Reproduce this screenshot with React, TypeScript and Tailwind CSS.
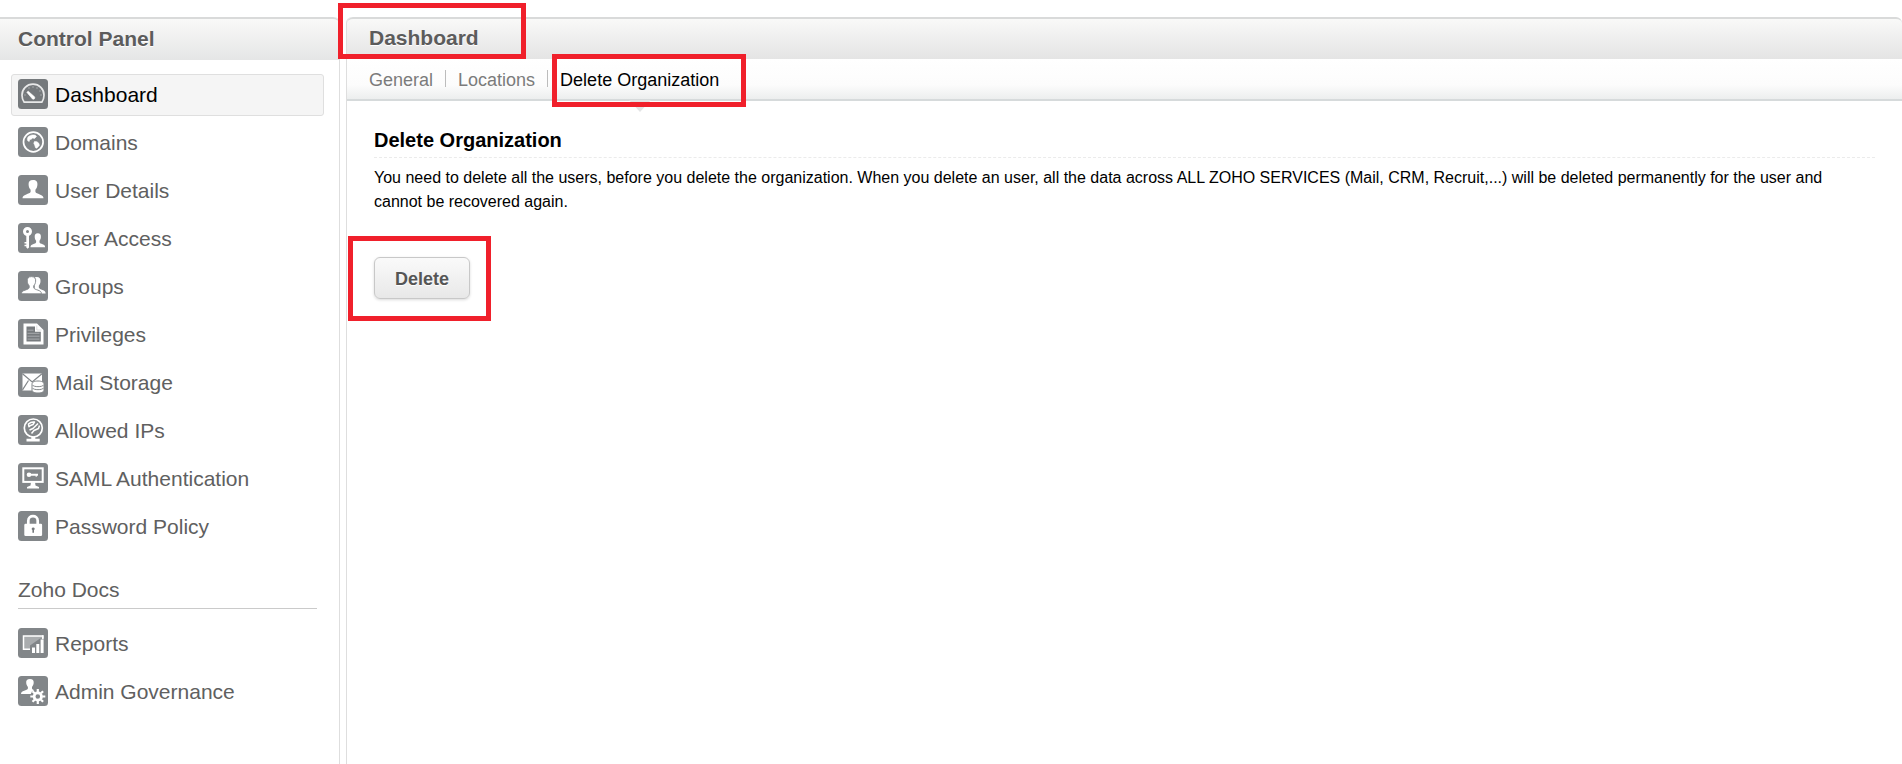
import { useId, useState, type ReactNode } from "react";

function IconTile({ active = false, children }: { active?: boolean; children: ReactNode }) {
  return (
    <svg viewBox="0 0 30 30" className="h-[30px] w-[30px] shrink-0" aria-hidden="true">
      <rect width="30" height="30" rx="3.5" fill={active ? "#75797c" : "#828689"} />
      {children}
    </svg>
  );
}

function Cutout({ mask, children }: { mask: ReactNode; children: ReactNode }) {
  const id = useId();
  return (
    <>
      <mask id={id}>
        <rect width="30" height="30" fill="#fff" />
        {mask}
      </mask>
      <g mask={`url(#${id})`}>{children}</g>
    </>
  );
}

const PERSON =
  "M15 5c-3.300 0-4.700 2-4.400 4.800.1 2.200.9 3.800 2 5v2c-.3 1.400-2.400 1.900-4.400 2.600-2.400.8-3.700 1.700-3.700 3.900h21c0-2.200-1.300-3.100-3.700-3.900-2-.7-4.100-1.200-4.400-2.600v-2c1.100-1.200 1.900-2.800 2-5 .3-2.800-1.100-4.800-4.400-4.800z";

function DashboardIcon() {
  return (
    <IconTile active>
      <path
        d="M6.200 23.200C4.800 21.200 4 19 4 16.200 4 9.800 8.800 5.200 15 5.200s11 4.600 11 11c0 2.800-.8 5-2.200 7z"
        fill="none"
        stroke="#e8e9e9"
        strokeWidth="1.700"
        strokeLinejoin="round"
      />
      <path d="M8.800 13.300 10.200 12.200l6.300 5.600c1 1.500-.5 3-2 2.200z" fill="#fff" stroke="#fff" strokeWidth=".6" />
      <g fill="#a9acae">
        <circle cx="11" cy="9" r=".8" />
        <circle cx="15" cy="8" r=".8" />
        <circle cx="19" cy="9" r=".8" />
        <circle cx="22" cy="12" r=".8" />
        <circle cx="23" cy="16" r=".8" />
        <circle cx="7" cy="16" r=".8" />
      </g>
    </IconTile>
  );
}

function DomainsIcon() {
  return (
    <IconTile>
      <circle cx="15.300" cy="15" r="9.800" fill="none" stroke="#fff" strokeWidth="1.700" />
      <path
        d="M10.500 9.500c2-1.500 4.500-2 7-1.200l1 1.200-2 2-1.800-.6-1.500 1.300-1.500.3-.5 2-1.500-.8c-.6-1.500-.3-3 .8-4.200zM16.500 14.500l2.500.3 2 1.700.3 2-2.500 2.700-1.300-.5-.8-2.700-.9-1.700z"
        fill="#fff"
        stroke="#fff"
        strokeWidth=".6"
      />
    </IconTile>
  );
}

function UserIcon() {
  return (
    <IconTile>
      <path d={PERSON} fill="#fff" />
    </IconTile>
  );
}

function UserAccessIcon() {
  return (
    <IconTile>
      <circle cx="9.500" cy="8.500" r="3" fill="none" stroke="#fff" strokeWidth="3" />
      <path d="M8.300 11.500h2.700v13l-1.400 1.300-1.300-1.300v-1.200H6.500v-1.500h1.800v-1.200H6.500V19h1.800z" fill="#fff" />
      <path d={PERSON} fill="#fff" transform="translate(9.300 6.500) scale(.7 .76)" />
    </IconTile>
  );
}

function GroupsIcon() {
  return (
    <IconTile>
      <path d={PERSON} fill="#fff" transform="translate(6.200 1.500) scale(.84 .9)" />
      <path
        d={PERSON}
        fill="#fff"
        stroke="#828689"
        strokeWidth="1"
        transform="translate(-.8 .9) scale(.95 .94)"
      />
    </IconTile>
  );
}

function PrivilegesIcon() {
  return (
    <IconTile>
      <path d="M5.500 4.500H19l6.500 6.500v14.500h-20z" fill="#fff" />
      <path d="M8.500 7.500H17v5.300h5.800v9.700H8.500z" fill="#777b7e" />
      <path d="M9.500 11.200h6M9.500 14.300h12M9.500 17.200h12M9.500 20.100h12" stroke="#b5b8ba" strokeWidth=".8" />
      <path d="M18.800 6.500v4.500h4.700" fill="none" stroke="#d5d6d7" strokeWidth=".8" />
    </IconTile>
  );
}

function MailStorageIcon() {
  return (
    <IconTile>
      <path d="M4.500 6.500h19.500v17H4.500z" fill="#fff" />
      <path d="M4.500 6.800 14.200 15l9.800-8.200M4.500 22.800l6-9.300" fill="none" stroke="#828689" strokeWidth="1.200" />
      <path
        d="M14 17c0-1.900 2.600-3 6-3s6 1.100 6 3v6c0 1.900-2.600 3-6 3s-6-1.100-6-3z"
        fill="#fff"
        stroke="#828689"
        strokeWidth="1"
      />
      <path
        d="M14.500 18c1 2.200 10 2.200 11 0M14.500 21c1 2.200 10 2.200 11 0"
        fill="none"
        stroke="#85898b"
        strokeWidth="1"
      />
    </IconTile>
  );
}

function AllowedIpsIcon() {
  return (
    <IconTile>
      <circle cx="15.300" cy="13" r="9" fill="none" stroke="#fff" strokeWidth="1.700" />
      <path
        d="M10.500 9c1.700-1.700 3.700-2.300 6-2l-1.500 2.500-2.500 1-1.500 1.300zM11.500 15l3.500-1.500 5-5M13.500 18.500l2.500-3 4.500-2 1-3"
        fill="none"
        stroke="#fff"
        strokeWidth="1.500"
        strokeLinejoin="round"
      />
      <path d="M13.300 21.500h4v2.300h4.400v2.700H8.500v-2.700h4.800z" fill="#fff" />
    </IconTile>
  );
}

function SamlIcon() {
  return (
    <IconTile>
      <rect x="5.300" y="5.300" width="19.400" height="13.600" fill="none" stroke="#fff" strokeWidth="2" />
      <circle cx="11" cy="11.800" r="2.300" fill="#fff" />
      <path d="M12 10.800h8v2h-1.200v1h-1.200v-1H12z" fill="#fff" />
      <path d="M13 19h4l.5 3.500 3.500 1.500v1.500H9V24l3.500-1.500z" fill="#fff" />
    </IconTile>
  );
}

function PasswordIcon() {
  return (
    <IconTile>
      <path d="M10.300 14V9.700c0-6 9.400-6 9.400 0V14" fill="none" stroke="#fff" strokeWidth="2.700" />
      <rect x="6.300" y="12.700" width="17.800" height="12.300" rx="1.200" fill="#fff" />
      <path d="M15.200 16.500c1.700 0 2 2 .8 2.600v2.600h-1.600v-2.600c-1.200-.6-.9-2.600.8-2.600z" fill="#75797c" />
    </IconTile>
  );
}

function ReportsIcon() {
  return (
    <IconTile>
      <path d="M5.500 8h19.300v13.300H5.500z" fill="#a9acae" stroke="#fff" strokeWidth="1.500" />
      <path d="M12 17.500 22 10.500h5V26H12z" fill="#828689" />
      <g fill="#fff">
        <path d="M14 19.500h3V25h-3z" />
        <path d="M18.300 16h3v9h-3z" />
        <path d="M22.600 11.500h3V25h-3z" />
      </g>
      <path d="M24.800 7.300v4" stroke="#fff" strokeWidth="1.500" />
    </IconTile>
  );
}

function AdminIcon() {
  return (
    <IconTile>
      <Cutout mask={<circle cx="19.800" cy="20.500" r="7.500" fill="#000" />}>
        <path d={PERSON} fill="#fff" transform="translate(-.8 -1.200) scale(.85 .82)" />
      </Cutout>
      <circle cx="19.800" cy="20.500" r="3.700" fill="none" stroke="#fff" strokeWidth="2.800" />
      <path
        d="M19.800 13v15M12.300 20.500h15M14.500 15.200l10.600 10.600M25.100 15.200 14.500 25.800"
        stroke="#fff"
        strokeWidth="2.200"
        strokeDasharray="3 9"
      />
    </IconTile>
  );
}

const MENU = [
  { label: "Dashboard", Icon: DashboardIcon },
  { label: "Domains", Icon: DomainsIcon },
  { label: "User Details", Icon: UserIcon },
  { label: "User Access", Icon: UserAccessIcon },
  { label: "Groups", Icon: GroupsIcon },
  { label: "Privileges", Icon: PrivilegesIcon },
  { label: "Mail Storage", Icon: MailStorageIcon },
  { label: "Allowed IPs", Icon: AllowedIpsIcon },
  { label: "SAML Authentication", Icon: SamlIcon },
  { label: "Password Policy", Icon: PasswordIcon },
];

const DOCS_MENU = [
  { label: "Reports", Icon: ReportsIcon },
  { label: "Admin Governance", Icon: AdminIcon },
];

function Menu({ items, current }: { items: typeof MENU; current?: string }) {
  return (
    <ul className="flex flex-col gap-1.5 pr-[15px] pl-[11px]">
      {items.map(({ label, Icon }) => (
        <li key={label}>
          <a
            href="#"
            aria-current={label === current ? "page" : undefined}
            className={
              label === current
                ? "flex h-[42px] items-start gap-[7px] rounded-[3px] border border-[#dfdfdf] bg-[#f5f5f5] px-1.5 pt-1 text-[21px] leading-8 text-black"
                : "flex h-[42px] items-start gap-[7px] rounded-[3px] border border-transparent px-1.5 pt-1 text-[21px] leading-8 text-[#606060]"
            }
          >
            <Icon />
            {label}
          </a>
        </li>
      ))}
    </ul>
  );
}

function Highlight({ className }: { className: string }) {
  return <span aria-hidden="true" className={`pointer-events-none absolute z-10 border-[5px] border-[#f0202b] ${className}`} />;
}

export default function App() {
  const [tab, setTab] = useState("Delete Organization");
  const tabs = ["General", "Locations", "Delete Organization"];

  return (
    <div className="flex min-h-screen gap-1.5 bg-white pt-[17px] font-['Liberation_Sans',Arial,sans-serif] text-black">
      <aside className="w-[340px] shrink-0 rounded-tr-md border-r border-[#dedede]">
        <h2 className="flex h-[43px] items-center rounded-tr-md border-t-2 border-[#d9dada] bg-linear-to-b from-[#f9f9f8] to-[#e5e6e6] pb-0.5 pl-[18px] text-[21px] leading-6 font-bold text-[#5c5c5c] [text-shadow:0_1px_0_#fff]">
          Control Panel
        </h2>
        <nav aria-label="Control Panel" className="pt-3.5">
          <Menu items={MENU} current="Dashboard" />
          <h3 className="mt-7 mr-[22px] ml-[18px] border-b border-[#cacaca] pb-1 text-[21px] leading-7 text-[#606060]">
            Zoho Docs
          </h3>
          <div className="mt-3.5">
            <Menu items={DOCS_MENU} />
          </div>
        </nav>
      </aside>

      <main className="min-w-0 flex-1 rounded-tl-md border-l border-[#dedede]">
        <header className="flex h-[42px] items-center rounded-t-md border-t-2 border-[#d9dada] bg-linear-to-b from-[#f9f9f8] to-[#e4e4e4] pb-0.5 pl-[22px]">
          <h1 className="relative text-[21px] leading-6 font-bold text-[#5c5c5c] [text-shadow:0_1px_0_#fff]">
            Dashboard
            <Highlight className="-top-[23px] -right-[47px] -bottom-[9px] -left-[31px]" />
          </h1>
        </header>
        <div className="flex h-[42px] items-center border-b-2 border-[#d6dadb] bg-[linear-gradient(#fff,#fcfcfc_65%,#eceeee)] pt-0.5 pl-[22px] text-[18px] leading-6">
          {tabs.map((name, i) => (
            <div key={name} className="flex items-center">
              {i > 0 && <span aria-hidden="true" className="mr-3 mb-1 ml-3 h-[17px] w-px bg-[#bcbcbc]" />}
              <button
                type="button"
                onClick={() => setTab(name)}
                className={name === tab ? "relative text-black" : "text-[#7b7b7b]"}
              >
                {name}
                {name === tab && (
                  <svg
                    aria-hidden="true"
                    viewBox="0 0 22 12"
                    className="absolute top-8 left-1/2 h-3 w-[22px] -translate-x-1/2"
                  >
                    <path d="M0 0h22L11 12z" fill="#e3e4e5" />
                  </svg>
                )}
                {i === 2 && <Highlight className="-top-[14px] -right-[27px] -bottom-[15px] -left-2" />}
              </button>
            </div>
          ))}
        </div>

        <section className="pt-[25px] pr-[27px] pl-[27px]">
          <h2 className="border-b border-dashed border-[#ebebeb] pb-[3px] text-[20px] leading-7 font-bold">
            Delete Organization
          </h2>
          <p className="pt-2 pr-5 text-[16px] leading-6">
            You need to delete all the users, before you delete the organization. When you delete an user, all the data
            across ALL ZOHO SERVICES (Mail, CRM, Recruit,...) will be deleted permanently for the user and cannot be
            recovered again.
          </p>
          <div className="relative mt-[43px] inline-flex">
            <button
              type="button"
              className="h-[42px] rounded-md border border-[#c8c8c8] bg-linear-to-b from-[#fafafa] to-[#e8e8e8] px-5 pt-1 pb-0.5 text-[18px] leading-6 font-bold text-[#555] shadow-[0_1px_3px_rgba(0,0,0,0.15)] [text-shadow:0_1px_0_#fff]"
            >
              Delete
            </button>
            <Highlight className="-top-[21px] -right-[21px] -bottom-[22px] -left-[26px]" />
          </div>
        </section>
      </main>
    </div>
  );
}
